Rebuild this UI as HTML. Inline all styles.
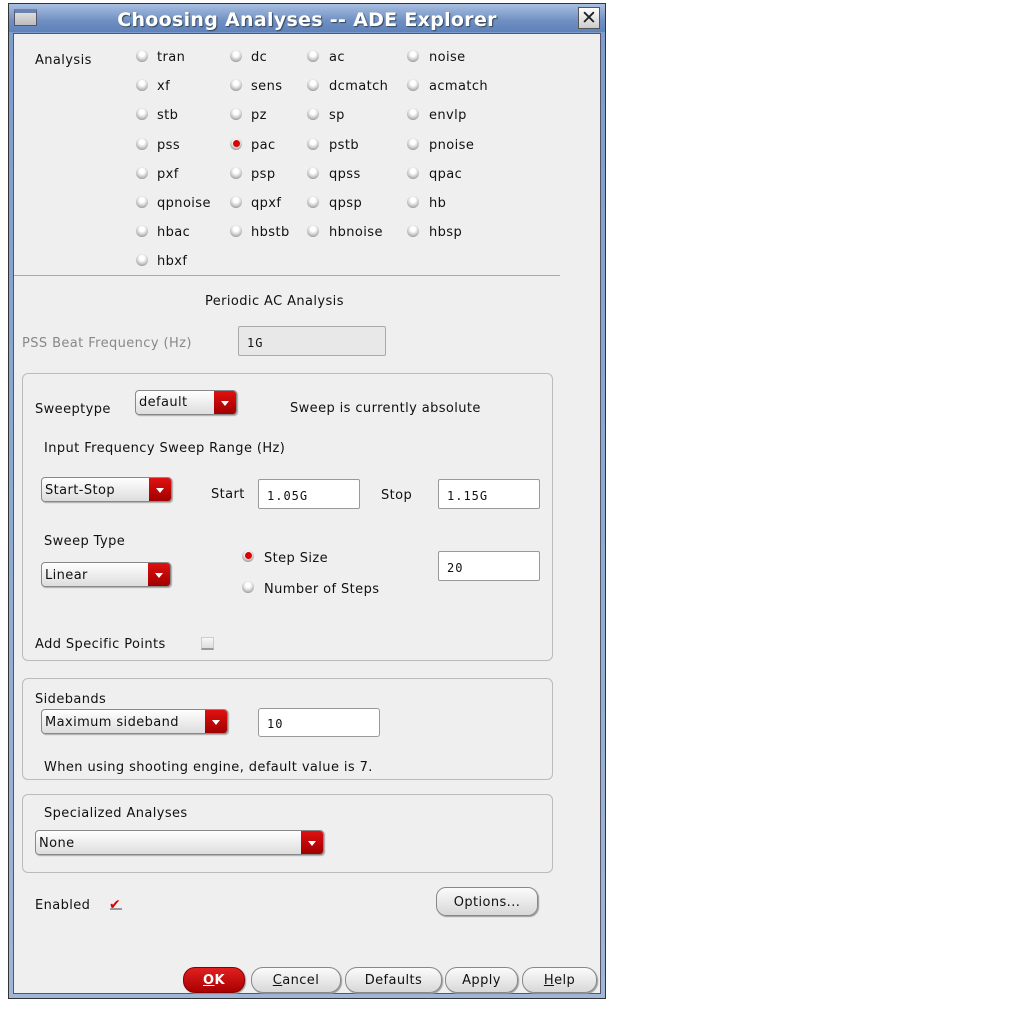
<!DOCTYPE html>
<html><head><meta charset="utf-8"><style>
*{margin:0;padding:0;box-sizing:border-box}
body{width:1013px;height:1011px;background:#fff;position:relative;overflow:hidden;font-family:"DejaVu Sans","Liberation Sans",sans-serif;font-size:13px;color:#111}
.a{position:absolute;white-space:nowrap;line-height:16px;margin-top:2px;letter-spacing:0.4px}
.frame{position:absolute;left:8px;top:3px;width:598px;height:996px;border:1px solid #333;background:linear-gradient(#7d9ccc,#9fb6d8);}
.title{position:absolute;left:9px;top:4px;width:596px;height:28px;background:linear-gradient(#a9bfe0,#6f8fc2 60%,#5f82ba);}
.content{position:absolute;left:13px;top:33px;width:588px;height:961px;background:#efefef;border:1px solid #556;}
.rad{position:absolute;width:12px;height:12px;border-radius:50%;background:radial-gradient(circle at 50% 35%,#fff 25%,#bbb 65%,#666 100%);}
.rad.on::after{content:"";position:absolute;left:3px;top:2px;width:7px;height:7px;border-radius:50%;background:#d00;}
.box{position:absolute;border:1px solid #bbb;border-radius:6px;}
.field{position:absolute;background:#fff;border:1px solid #999;border-radius:2px;font-family:"DejaVu Sans Mono","Liberation Mono",monospace;font-size:12px;padding-left:8px;letter-spacing:1px}
.dd{position:absolute;border:1px solid #888;border-radius:4px;background:linear-gradient(#fff,#ddd);padding-left:3px;overflow:hidden;box-shadow:1px 1px 1px #aaa;letter-spacing:0.4px}
.dd::after{content:"";position:absolute;right:0;top:0;bottom:0;width:22px;background:linear-gradient(#e01010,#a00000);}
.dd i{position:absolute;right:7px;top:50%;margin-top:-2px;width:0;height:0;border-left:4px solid transparent;border-right:4px solid transparent;border-top:5px solid #fff;z-index:2}
.btn{position:absolute;border:1px solid #888;border-radius:12px;background:linear-gradient(#fbfbfb,#d8d8d8);text-align:center;line-height:26px;box-shadow:1px 1px 1px #999;letter-spacing:0.4px}
</style></head><body>
<div class="frame"></div>
<div class="title"></div>
<div style="position:absolute;left:14px;top:9px;width:23px;height:17px;background:linear-gradient(#ddd,#bbb);border:1px solid #556;border-top:4px solid #6a84b0"></div>
<div class="a" style="left:0;width:614px;text-align:center;top:7px;font-size:19px;line-height:22px;font-weight:bold;color:#fff;text-shadow:1px 1px 1px #345;letter-spacing:0.3px">Choosing Analyses -- ADE Explorer</div>
<div style="position:absolute;left:578px;top:7px;width:22px;height:22px;background:linear-gradient(#fff,#ccc);border:1px solid #555;text-align:center;font-size:19px;line-height:20px;font-weight:bold;color:#222">✕</div>
<div class="content"></div>

<div class="a" style="left:35px;top:51px">Analysis</div>
<div class="rad" style="left:136px;top:50px"></div><div class="a" style="left:157px;top:48px">tran</div>
<div class="rad" style="left:230px;top:50px"></div><div class="a" style="left:251px;top:48px">dc</div>
<div class="rad" style="left:307px;top:50px"></div><div class="a" style="left:329px;top:48px">ac</div>
<div class="rad" style="left:407px;top:50px"></div><div class="a" style="left:429px;top:48px">noise</div>

<div class="rad" style="left:136px;top:79px"></div><div class="a" style="left:157px;top:77px">xf</div>
<div class="rad" style="left:230px;top:79px"></div><div class="a" style="left:251px;top:77px">sens</div>
<div class="rad" style="left:307px;top:79px"></div><div class="a" style="left:329px;top:77px">dcmatch</div>
<div class="rad" style="left:407px;top:79px"></div><div class="a" style="left:429px;top:77px">acmatch</div>

<div class="rad" style="left:136px;top:108px"></div><div class="a" style="left:157px;top:106px">stb</div>
<div class="rad" style="left:230px;top:108px"></div><div class="a" style="left:251px;top:106px">pz</div>
<div class="rad" style="left:307px;top:108px"></div><div class="a" style="left:329px;top:106px">sp</div>
<div class="rad" style="left:407px;top:108px"></div><div class="a" style="left:429px;top:106px">envlp</div>

<div class="rad" style="left:136px;top:138px"></div><div class="a" style="left:157px;top:136px">pss</div>
<div class="rad on" style="left:230px;top:138px"></div><div class="a" style="left:251px;top:136px">pac</div>
<div class="rad" style="left:307px;top:138px"></div><div class="a" style="left:329px;top:136px">pstb</div>
<div class="rad" style="left:407px;top:138px"></div><div class="a" style="left:429px;top:136px">pnoise</div>

<div class="rad" style="left:136px;top:167px"></div><div class="a" style="left:157px;top:165px">pxf</div>
<div class="rad" style="left:230px;top:167px"></div><div class="a" style="left:251px;top:165px">psp</div>
<div class="rad" style="left:307px;top:167px"></div><div class="a" style="left:329px;top:165px">qpss</div>
<div class="rad" style="left:407px;top:167px"></div><div class="a" style="left:429px;top:165px">qpac</div>

<div class="rad" style="left:136px;top:196px"></div><div class="a" style="left:157px;top:194px">qpnoise</div>
<div class="rad" style="left:230px;top:196px"></div><div class="a" style="left:251px;top:194px">qpxf</div>
<div class="rad" style="left:307px;top:196px"></div><div class="a" style="left:329px;top:194px">qpsp</div>
<div class="rad" style="left:407px;top:196px"></div><div class="a" style="left:429px;top:194px">hb</div>

<div class="rad" style="left:136px;top:225px"></div><div class="a" style="left:157px;top:223px">hbac</div>
<div class="rad" style="left:230px;top:225px"></div><div class="a" style="left:251px;top:223px">hbstb</div>
<div class="rad" style="left:307px;top:225px"></div><div class="a" style="left:329px;top:223px">hbnoise</div>
<div class="rad" style="left:407px;top:225px"></div><div class="a" style="left:429px;top:223px">hbsp</div>

<div class="rad" style="left:136px;top:254px"></div><div class="a" style="left:157px;top:252px">hbxf</div>

<div style="position:absolute;left:14px;top:275px;width:546px;height:1px;background:#aaa"></div>
<div class="a" style="left:205px;top:292px">Periodic AC Analysis</div>
<div class="a" style="left:22px;top:334px;color:#888">PSS Beat Frequency (Hz)</div>
<div class="field" style="left:238px;top:326px;width:148px;height:30px;background:#e8e8e8;border-color:#aaa;line-height:32px">1G</div>

<div class="box" style="left:22px;top:373px;width:531px;height:288px"></div>
<div class="a" style="left:35px;top:400px">Sweeptype</div>
<div class="dd" style="left:135px;top:390px;width:102px;height:25px;line-height:23px">default<i></i></div>
<div class="a" style="left:290px;top:399px">Sweep is currently absolute</div>
<div class="a" style="left:44px;top:439px">Input Frequency Sweep Range (Hz)</div>
<div class="dd" style="left:41px;top:477px;width:131px;height:25px;line-height:25px">Start-Stop<i></i></div>
<div class="a" style="left:211px;top:485px">Start</div>
<div class="field" style="left:258px;top:479px;width:102px;height:30px;line-height:32px">1.05G</div>
<div class="a" style="left:381px;top:486px">Stop</div>
<div class="field" style="left:438px;top:479px;width:102px;height:30px;line-height:32px">1.15G</div>
<div class="a" style="left:44px;top:532px">Sweep Type</div>
<div class="dd" style="left:41px;top:562px;width:130px;height:25px;line-height:25px">Linear<i></i></div>
<div class="rad on" style="left:242px;top:550px"></div><div class="a" style="left:264px;top:549px">Step Size</div>
<div class="rad" style="left:242px;top:581px"></div><div class="a" style="left:264px;top:580px">Number of Steps</div>
<div class="field" style="left:438px;top:551px;width:102px;height:30px;line-height:32px">20</div>
<div class="a" style="left:35px;top:635px">Add Specific Points</div>
<div style="position:absolute;left:201px;top:637px;width:13px;height:13px;background:linear-gradient(#f8f8f8,#ddd);border:1px solid #ccc;border-bottom:2px solid #999"></div>

<div class="box" style="left:22px;top:678px;width:531px;height:102px"></div>
<div class="a" style="left:35px;top:690px">Sidebands</div>
<div class="dd" style="left:41px;top:709px;width:187px;height:25px;line-height:25px">Maximum sideband<i></i></div>
<div class="field" style="left:258px;top:708px;width:122px;height:29px;line-height:31px;border-radius:3px">10</div>
<div class="a" style="left:44px;top:758px">When using shooting engine, default value is 7.</div>

<div class="box" style="left:22px;top:794px;width:531px;height:79px"></div>
<div class="a" style="left:44px;top:804px">Specialized Analyses</div>
<div class="dd" style="left:35px;top:830px;width:289px;height:25px;line-height:25px">None<i></i></div>

<div class="a" style="left:35px;top:896px">Enabled</div>
<div style="position:absolute;left:110px;top:898px;width:12px;height:12px;border-bottom:2px solid #999"></div>
<div class="a" style="left:109px;top:895px;color:#d00;font-weight:bold;font-size:14px">✔</div>
<div class="btn" style="left:436px;top:887px;width:102px;height:29px;line-height:30px;border-radius:10px">Options...</div>

<div class="btn" style="left:183px;top:967px;width:62px;height:26px;background:linear-gradient(#e02020,#a80000);color:#fff;font-weight:bold;border-color:#800"><u>O</u>K</div>
<div class="btn" style="left:251px;top:967px;width:90px;height:26px"><u>C</u>ancel</div>
<div class="btn" style="left:345px;top:967px;width:97px;height:26px">Defaults</div>
<div class="btn" style="left:445px;top:967px;width:73px;height:26px">Apply</div>
<div class="btn" style="left:522px;top:967px;width:75px;height:26px"><u>H</u>elp</div>
</body></html>
